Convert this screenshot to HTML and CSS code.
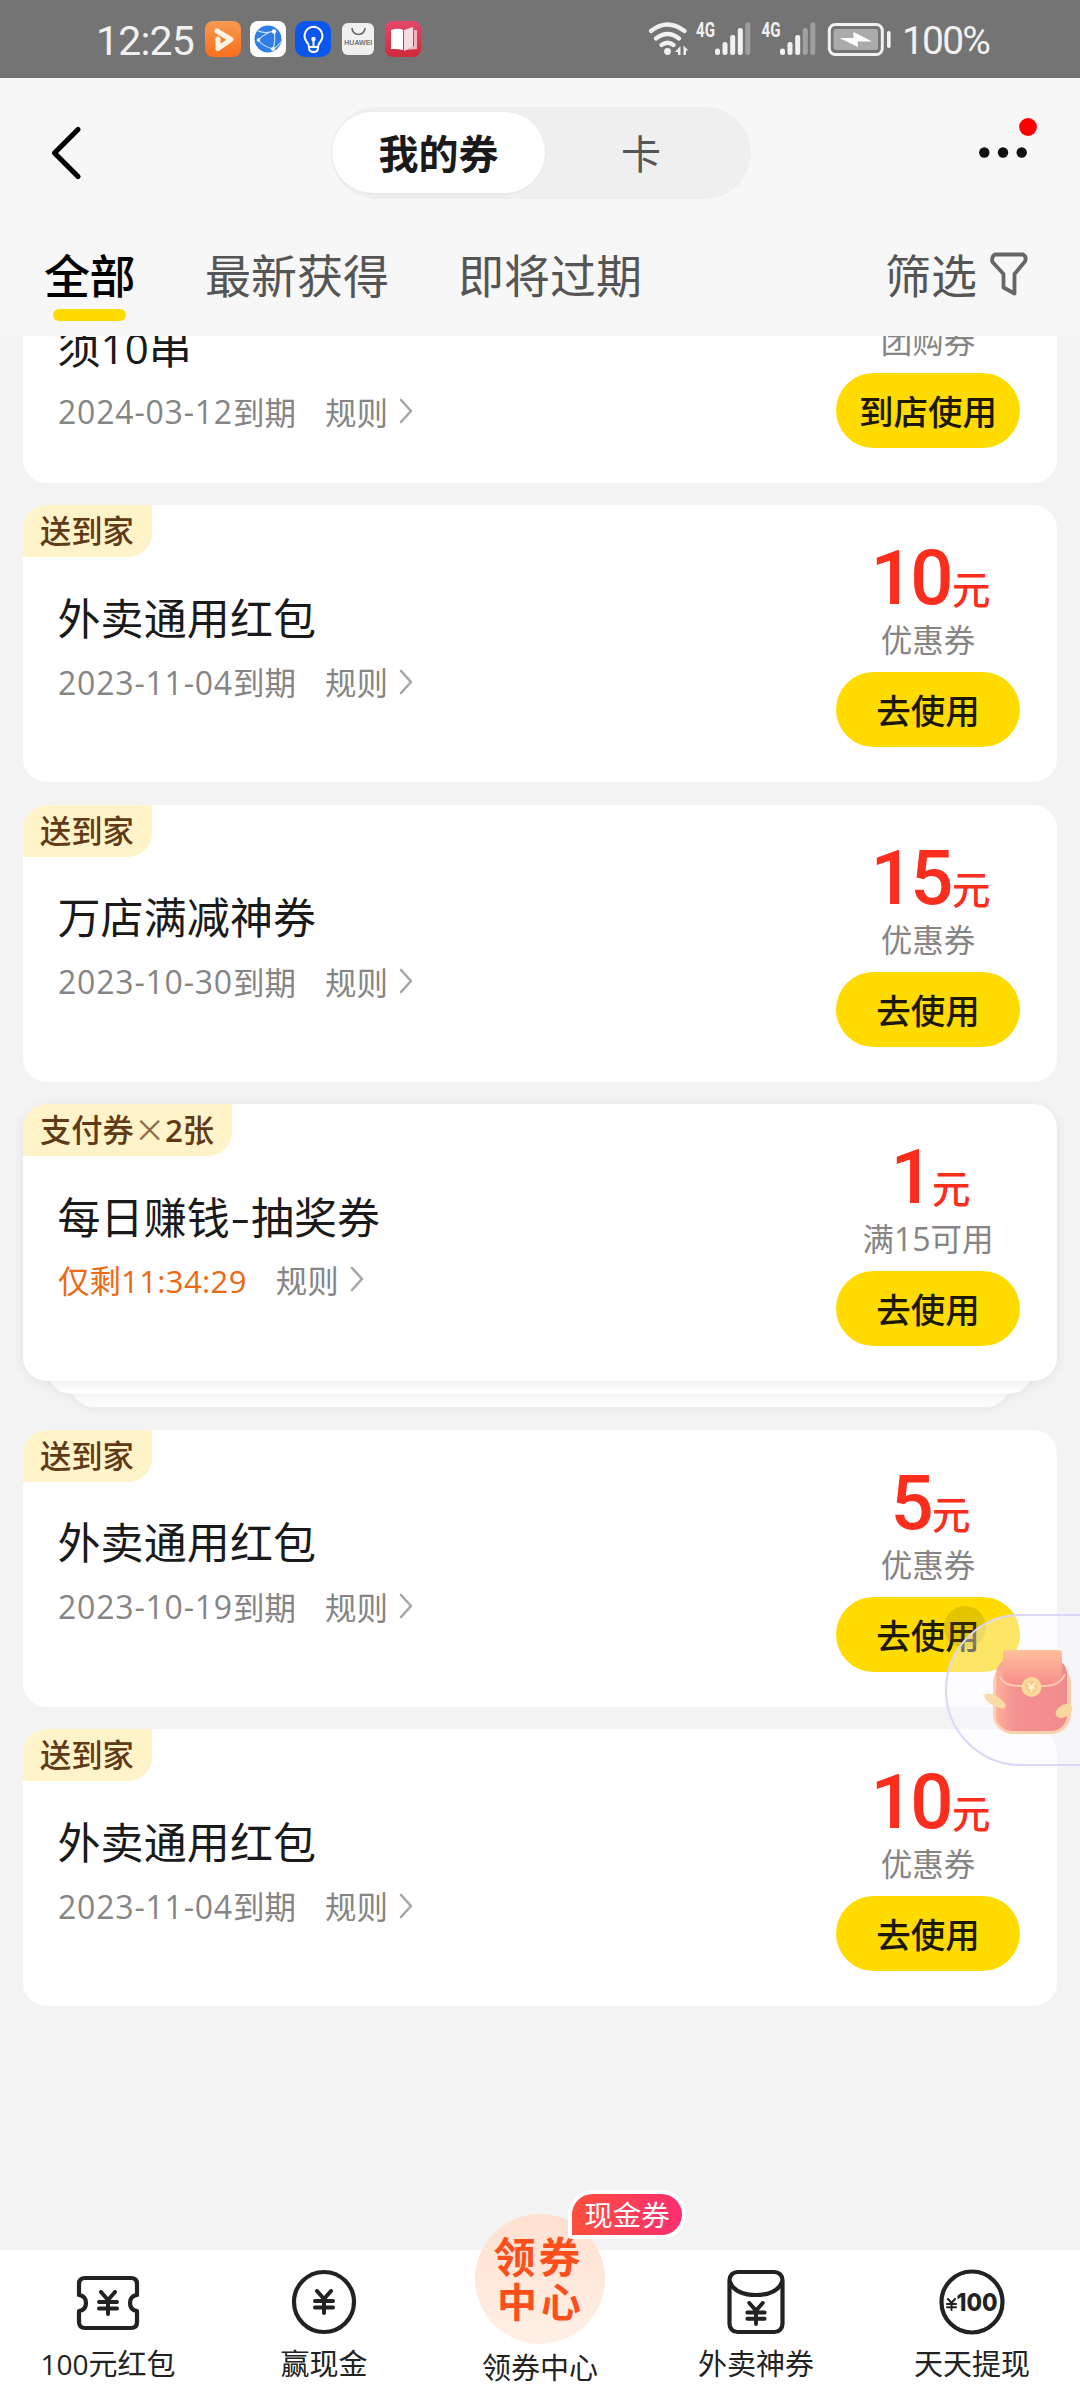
FILE: index.html
```html
<!DOCTYPE html>
<html lang="zh-CN">
<head>
<meta charset="utf-8">
<title>我的券</title>
<link rel="stylesheet" href="styles.css">
</head>
<body>
<svg class="defs" width="0" height="0">
  <defs>
    <symbol id="chev" viewBox="0 0 14 26"><path d="M2 2l10 11L2 24" fill="none" stroke="#a6a6a6" stroke-width="2.6" stroke-linecap="round" stroke-linejoin="round"/></symbol>
    <symbol id="yuan" viewBox="0 0 22 26"><path d="M4 2l7 8 7-8M11 10v14M2 12h18M2 18.500h18" fill="none" stroke="#222" stroke-width="4" stroke-linecap="round" stroke-linejoin="round"/></symbol>
    <linearGradient id="gv" x1="0" y1="0" x2="0" y2="1"><stop offset="0" stop-color="#f79a52"/><stop offset="1" stop-color="#f86f1c"/></linearGradient>
    <linearGradient id="gr" x1="0" y1="0" x2="0" y2="1"><stop offset="0" stop-color="#e2486a"/><stop offset="1" stop-color="#d02a38"/></linearGradient>
    <linearGradient id="flap" x1="0" y1="0" x2="0" y2="1"><stop offset="0" stop-color="#ffc09a"/><stop offset="1" stop-color="#f88c8c"/></linearGradient>
    <linearGradient id="pack" x1="0" y1="0" x2="1" y2="0"><stop offset="0" stop-color="#fbb09c"/><stop offset=".25" stop-color="#f59290"/><stop offset="1" stop-color="#f08d8c"/></linearGradient>
  </defs>
</svg>

<div class="screen">
  <div class="status">
    <div class="clock">12:25</div>
    <svg class="apps" width="218" height="40" viewBox="204 20 218 40">
      <rect x="205" y="21" width="36" height="36" rx="8" fill="url(#gv)"/>
      <path d="M217 31l14 8.500-13 9V39" fill="none" stroke="#fff3e4" stroke-width="5" stroke-linejoin="round" stroke-linecap="round"/>
      <rect x="250" y="21" width="36" height="36" rx="8" fill="#fff"/>
      <circle cx="268" cy="39" r="13.500" fill="#2f7de6"/>
      <path d="M274 31Q265 33 258 40Q264 47 273 49M274 31Q276 40 273 49M258 31Q266 34 274 31M273 49Q277 47 281 42" fill="none" stroke="#cfe4ff" stroke-width="1.100"/>
      <circle cx="258.500" cy="40" r="1.800" fill="#fff"/><circle cx="274" cy="31.500" r="2.200" fill="#fff"/><circle cx="273" cy="49" r="2" fill="#fff"/>
      <rect x="295" y="21" width="36" height="36" rx="10" fill="#0b57ee"/>
      <path d="M309 48q0-4-2.500-6.500a9 9 0 1 1 14 0Q318 44 318 48q0 4-4.500 4T309 48zM309 47h9M313.500 46v-7" fill="none" stroke="#fff" stroke-width="2" stroke-linejoin="round"/>
      <circle cx="313.500" cy="39" r="2.200" fill="#fff"/>
      <rect x="342" y="23" width="32" height="32" rx="6" fill="#f0f0f0"/>
      <path d="M352 28a6.500 6.500 0 0 0 13 0" fill="none" stroke="#666" stroke-width="1.600"/>
      <text x="358.300" y="44.500" text-anchor="middle" class="brand" textLength="28">HUAWEI</text>
      <rect x="385" y="21" width="36" height="36" rx="8" fill="url(#gr)"/>
      <path d="M391 30q8-2.500 12 0v20q-5-1.500-12-1z" fill="#fff"/>
      <path d="M404 30l9-3v20l-9 4z" fill="#f8dbe0"/><path d="M414 30h3v19l-12 1 9-4z" fill="#f2b4bc"/>
    </svg>
    <svg class="signals" width="246" height="40" viewBox="648 18 246 40">
      <g fill="none" stroke="#f1f1f1" stroke-linecap="round" stroke-width="4.200">
        <path d="M651 31q16.500-13 33.500 0M656 38.500q11.500-9 23 0M661.500 45q6-4.500 12 0"/>
      </g>
      <circle cx="667.500" cy="51.500" r="3.400" fill="#f1f1f1"/>
      <path d="M680.500 46v9h-2.500v-3h-3zM683.500 55v-9.500l5 5h-2.500V55z" fill="#f1f1f1"/>
      <text x="696" y="37" class="net" textLength="19" lengthAdjust="spacingAndGlyphs">4G</text>
      <g fill="#f1f1f1"><rect x="715" y="48.500" width="5" height="6.500" rx="2.200"/><rect x="722.500" y="42" width="5" height="13" rx="2.200"/><rect x="730.200" y="35" width="5" height="20" rx="2.200"/><rect x="737.800" y="28" width="5" height="27" rx="2.200"/><rect x="745.300" y="22.500" width="5" height="32.500" rx="2.200" fill="#a0a0a0"/></g>
      <text x="761.500" y="37" class="net" textLength="19" lengthAdjust="spacingAndGlyphs">4G</text>
      <g fill="#f1f1f1"><rect x="780" y="48.500" width="5" height="6.500" rx="2.200"/><rect x="787.500" y="42" width="5" height="13" rx="2.200"/><rect x="795.200" y="35" width="5" height="20" rx="2.200"/><rect x="802.800" y="28" width="5" height="27" rx="2.200" fill="#a0a0a0"/><rect x="810.300" y="22.500" width="5" height="32.500" rx="2.200" fill="#a0a0a0"/></g>
      <rect x="829.300" y="24.500" width="53" height="30" rx="6" fill="none" stroke="#f1f1f1" stroke-width="3"/>
      <rect x="833.500" y="29" width="44.500" height="21" rx="2.500" fill="#ababab"/>
      <path d="M853.500 32l18.500 9.500h-14.500l.5 5.500-18.500-9h14z" fill="#fff"/>
      <rect x="887" y="31" width="3.600" height="17" rx="1.800" fill="#f1f1f1"/>
    </svg>
    <div class="percent">100%</div>
  </div>

  <header class="head">
    <div class="topbar">
      <svg class="back" width="34" height="58" viewBox="0 0 34 58"><path d="M29 5.500L5.500 29 29 52.500" fill="none" stroke="#000" stroke-width="5.200" stroke-linecap="round" stroke-linejoin="round"/></svg>
      <div class="switch"><div class="switch-on">我的券</div><div class="switch-off">卡</div></div>
      <svg class="more" width="60" height="60" viewBox="977 112 60 60"><circle cx="984.300" cy="152.500" r="5.200" fill="#111"/><circle cx="1003" cy="152.500" r="5.200" fill="#111"/><circle cx="1021.700" cy="152.500" r="5.200" fill="#111"/><circle cx="1028" cy="127" r="8.900" fill="#f00"/></svg>
    </div>
    <nav class="tabs">
      <div class="tab active">全部</div>
      <div class="tab">最新获得</div>
      <div class="tab">即将过期</div>
      <div class="filter">筛选<svg width="38" height="44" viewBox="0 0 38 44"><path d="M5 2.500h28q4 2 2 7L24.500 22v19.500l-11-6V22L2.500 10Q1 4.500 5 2.500z" fill="none" stroke="#666" stroke-width="3.800" stroke-linejoin="round"/></svg></div>
    </nav>
  </header>

  <main class="list">
    <section class="card first">
      <div class="info"><h2 class="title">须<span class="num">10</span>串</h2><p class="meta"><span class="date">2024-03-12</span>到期<span class="rule">规则</span><svg class="chev"><use href="#chev"/></svg></p></div>
      <div class="side"><div class="price"></div><div class="kind">团购券</div><div class="btn">到店使用</div></div>
    </section>
    <section class="card">
      <div class="info"><span class="tag">送到家</span><h2 class="title">外卖通用红包</h2><p class="meta"><span class="date">2023-11-04</span>到期<span class="rule">规则</span><svg class="chev"><use href="#chev"/></svg></p></div>
      <div class="side"><div class="price"><b>10</b>元</div><div class="kind">优惠券</div><div class="btn">去使用</div></div>
    </section>
    <section class="card">
      <div class="info"><span class="tag">送到家</span><h2 class="title">万店满减神券</h2><p class="meta"><span class="date">2023-10-30</span>到期<span class="rule">规则</span><svg class="chev"><use href="#chev"/></svg></p></div>
      <div class="side"><div class="price"><b>15</b>元</div><div class="kind">优惠券</div><div class="btn">去使用</div></div>
    </section>
    <div class="stack">
      <section class="card raised">
        <div class="info"><span class="tag">支付券<i class="times">×</i><span class="count">2</span>张</span><h2 class="title">每日赚钱<span class="dash">-</span>抽奖券</h2><p class="meta"><span class="left">仅剩<span class="timer">11:34:29</span></span><span class="rule">规则</span><svg class="chev"><use href="#chev"/></svg></p></div>
        <div class="side"><div class="price"><b>1</b>元</div><div class="kind">满<span class="limit">15</span>可用</div><div class="btn">去使用</div></div>
      </section>
      <div class="layer one"></div>
      <div class="layer two"></div>
    </div>
    <section class="card">
      <div class="info"><span class="tag">送到家</span><h2 class="title">外卖通用红包</h2><p class="meta"><span class="date">2023-10-19</span>到期<span class="rule">规则</span><svg class="chev"><use href="#chev"/></svg></p></div>
      <div class="side"><div class="price"><b>5</b>元</div><div class="kind">优惠券</div><div class="btn">去使用</div></div>
    </section>
    <section class="card">
      <div class="info"><span class="tag">送到家</span><h2 class="title">外卖通用红包</h2><p class="meta"><span class="date">2023-11-04</span>到期<span class="rule">规则</span><svg class="chev"><use href="#chev"/></svg></p></div>
      <div class="side"><div class="price"><b>10</b>元</div><div class="kind">优惠券</div><div class="btn">去使用</div></div>
    </section>
  </main>

  <nav class="bottom">
    <div class="item"><svg width="66" height="66" viewBox="0 0 66 66"><path d="M10 9h46q6 0 6 6v11q-7 1-7 8t7 8v11q0 6-6 6H10q-6 0-6-6V42q7-1 7-8t-7-8V15q0-6 6-6z" fill="none" stroke="#222" stroke-width="4.200" stroke-linejoin="round"/><use href="#yuan" x="22" y="21" width="22" height="26"/></svg><span><span class="sum">100</span>元红包</span></div>
    <div class="item"><svg width="66" height="66" viewBox="0 0 66 66"><circle cx="33" cy="33" r="30" fill="none" stroke="#222" stroke-width="4.200"/><use href="#yuan" x="22" y="20" width="22" height="26"/></svg><span>赢现金</span></div>
    <div class="item center"><div class="disc"><em>领券</em><em class="low">中心</em></div><div class="badge">现金券</div><span>领券中心</span></div>
    <div class="item"><svg width="66" height="66" viewBox="0 0 66 66"><rect x="6.500" y="3" width="53" height="60" rx="8" fill="none" stroke="#222" stroke-width="4.200"/><path d="M6.500 12q5 14 26.500 14t26.500-14" fill="none" stroke="#222" stroke-width="4.200"/><use href="#yuan" x="22" y="32" width="22" height="25"/></svg><span>外卖神券</span></div>
    <div class="item"><svg width="66" height="66" viewBox="0 0 66 66"><circle cx="33" cy="33" r="30.500" fill="none" stroke="#222" stroke-width="4.200"/><use href="#yuan" x="7" y="29" width="11" height="13"/><text x="17.500" y="41.500" class="hundred" textLength="41" lengthAdjust="spacingAndGlyphs">100</text></svg><span>天天提现</span></div>
  </nav>

  <div class="touch"></div>
  <div class="float">
    <svg width="92" height="90" viewBox="982 1646 92 90">
      <rect x="993" y="1663" width="78" height="71" rx="20" fill="#fbd0b0"/>
      <rect x="996" y="1658" width="71" height="73" rx="16" fill="url(#pack)"/>
      <path d="M1003 1652q0-2 3-2h52q4 0 4 3v24q-3 9-14 9h-28q-15-2-17-10z" fill="url(#flap)"/>
      <path d="M1000 1677q4 9 19 9h27q15-1 19-12" fill="none" stroke="#ffc6b4" stroke-width="2"/>
      <circle cx="1031.500" cy="1687" r="10" fill="#fbd99a"/><circle cx="1031.500" cy="1687" r="6" fill="#f7cf8a"/>
      <path d="M1028 1683l3.500 4 3.500-4M1031.500 1687v5M1028 1688h7" stroke="#fff5dc" stroke-width="1.600" fill="none"/>
      <ellipse cx="995" cy="1701" rx="12" ry="5" transform="rotate(30 995 1701)" fill="#fbdca4"/>
      <ellipse cx="1064" cy="1711" rx="9" ry="6" transform="rotate(-32 1064 1711)" fill="#fbd7a0"/>
    </svg>
  </div>
</div>
</body>
</html>
```
FILE: styles.css
```css
* { box-sizing: border-box; }
body { margin: 0; background: #f3f3f3; font-family: "Noto Sans CJK SC", sans-serif; color: #1a1a1a; }
h2, p { margin: 0; font-weight: 400; }
svg { display: block; flex: none; }
.defs { position: absolute; }
.screen { position: relative; width: 1080px; height: 2400px; overflow: hidden; display: flex; flex-direction: column; }

.status { height: 78px; background: #747474; display: flex; align-items: flex-start; color: #f1f1f1; border-bottom: 4px solid #717171; line-height: 83px; font-family: Roboto, sans-serif; }
.clock { width: 108px; margin-left: 96px; font-size: 41px; white-space: nowrap; letter-spacing: -.8px; }
.apps { margin-top: 20px; }
.signals { margin: 18px 0 0 226px; }
.percent { margin-left: 8px; font-size: 39px; letter-spacing: -1.8px; white-space: nowrap; }
.brand { font: 700 7px "Liberation Sans", sans-serif; fill: #777; }
.net { font: 700 20px Roboto, sans-serif; fill: #f1f1f1; }

.head { height: 258px; background: #f7f7f7; flex: none; }
.topbar { height: 150px; display: flex; align-items: flex-start; }
.back { margin: 46px 0 0 49px; }
.switch { display: flex; width: 420px; height: 92px; margin: 29px 0 0 248px; padding: 5px 2px 6px 1px; border-radius: 46px; background: #efefef; font-size: 40px; line-height: 81px; text-align: center; }
.switch-on { width: 213px; height: 81px; border-radius: 41px; background: #fff; font-weight: 700; box-shadow: 0 1px 3px rgba(0, 0, 0, .04); }
.switch-off { width: 192px; color: #555; }
.more { margin: 34px 0 0 226px; }
.tabs { display: flex; padding-left: 44px; height: 108px; font-size: 46px; line-height: 91px; color: #555; align-items: flex-start; }
.tab { margin-right: 72px; white-space: nowrap; }
.tab + .tab { margin-right: 69px; }
.active { position: relative; width: 89px; height: 93px; color: #000; font-weight: 500; letter-spacing: -.5px; }
.active::after { content: ""; position: absolute; left: 9px; bottom: 0; width: 73px; height: 12px; border-radius: 6px; background: #ffdb00; }
.filter { display: flex; margin-left: 174px; line-height: 91px; }
.filter svg { margin: 24px 0 0 13px; }

.list { height: 1914px; overflow: hidden; padding: 0 23px; display: flex; flex-direction: column; gap: 22.500px; }
.card { height: 277px; flex: none; border-radius: 24px; background: #fff; display: flex; justify-content: space-between; overflow: hidden; }
.first { margin-top: -130.500px; }
.info { display: flex; flex-direction: column; align-items: flex-start; }
.tag { height: 52px; padding: 0 18px 0 17px; line-height: 49px; font-size: 31.300px; font-weight: 500; color: #5f3a17; background: #fff3c9; border-radius: 24px 0 24px 0; white-space: nowrap; }
.times { display: inline-block; width: 31px; text-align: center; font-style: normal; font-weight: 400; color: #8a6a4a; }
.count { font-family: "Open Sans", sans-serif; font-weight: 600; }
.title { margin: 28.500px 0 0 34.500px; font-size: 43px; line-height: 60px; letter-spacing: .1px; white-space: nowrap; }
.title .num { font-family: "Open Sans", sans-serif; font-size: 42px; line-height: 1; }
.dash { display: inline-block; width: 21px; text-align: center; transform: scaleX(1.35); }
.first .title { margin-top: 109.500px; }
.meta { margin: 14px 0 0 35px; display: flex; align-items: center; font-size: 31.500px; line-height: 40px; color: #858585; white-space: nowrap; }
.date { margin-top: 3px; height: 40px; font-family: "Open Sans", sans-serif; font-size: 32px; letter-spacing: .8px; }
.limit { font-family: "Open Sans", sans-serif; font-size: 32px; line-height: 1; }
.left { color: #ec6a13; }
.timer { font-family: "Open Sans", sans-serif; font-size: 31px; line-height: 1; letter-spacing: .4px; }
.rule { margin: 0 11px 0 29px; }
.chev { width: 14px; height: 26px; margin-top: 1px; }
.side { width: 184px; margin-right: 37px; padding-top: 30px; text-align: center; }
.price { height: 75px; margin-bottom: 9px; padding-left: 5px; display: flex; justify-content: center; align-items: baseline; color: #fb2e1e; font-size: 38.500px; font-weight: 500; line-height: 1; }
.price b { font-family: Roboto, sans-serif; font-size: 76px; font-weight: 500; line-height: 87px; letter-spacing: -3.500px; margin-right: 2px; }
.kind { font-size: 31.500px; line-height: 38px; height: 38px; color: #858585; }
.btn { height: 75px; margin-top: 15px; border-radius: 38px; background: #ffdb00; font-size: 34.500px; font-weight: 500; line-height: 74px; color: #1d1900; white-space: nowrap; }
.stack { flex: none; display: flex; flex-direction: column; align-items: center; }
.raised { width: 100%; z-index: 3; box-shadow: 0 2px 12px rgba(0, 0, 0, .07); }
.layer { height: 40px; margin-top: -27px; border-radius: 0 0 24px 24px; background: #fdfdfd; box-shadow: 0 2px 10px rgba(0, 0, 0, .05); }
.one { width: 986px; z-index: 2; }
.two { width: 940px; z-index: 1; background: #fcfcfc; }

.bottom { height: 150px; background: #fff; display: flex; flex: none; }
.item { width: 216px; display: flex; flex-direction: column; align-items: center; padding-top: 19px; font-size: 29px; line-height: 40px; color: #222; white-space: nowrap; }
.item > span { margin-top: 7px; }
.sum { font-family: "Open Sans", sans-serif; font-size: 28px; line-height: 1; }
.center { position: relative; padding-top: 0; }
.disc { width: 130px; height: 130px; margin-top: -36px; padding-top: 19px; border-radius: 50%; background: linear-gradient(#ffe0d0, #fff0e6); color: #fc4f1b; display: flex; flex-direction: column; align-items: center; }
.disc em { font-style: normal; font-weight: 700; font-size: 42px; line-height: 44px; letter-spacing: 3px; margin-left: -3px; }
.disc .low { font-size: 40px; line-height: 46px; letter-spacing: 4px; margin-left: 2px; }
.item.center > span { margin-top: 2px; }
.badge { position: absolute; left: 136px; top: -60px; width: 118px; height: 49px; border: 4px solid #fff; border-radius: 25px 25px 25px 3px; background: linear-gradient(90deg, #ff4f3c, #fb2e70); color: #fff; font-size: 28.500px; line-height: 39px; text-align: center; }
.hundred { font: 800 25px Inter, sans-serif; fill: #222; }

.touch { position: absolute; left: 944px; top: 1606px; width: 42px; height: 42px; border-radius: 50%; background: rgba(120, 100, 0, .2); }
.float { position: absolute; left: 945px; top: 1614px; width: 160px; height: 152px; border: 2px solid #dcd6f8; border-radius: 76px 0 0 76px; background: rgba(250, 247, 255, .4); }
.float svg { margin: 30px 0 0 35px; }
```
